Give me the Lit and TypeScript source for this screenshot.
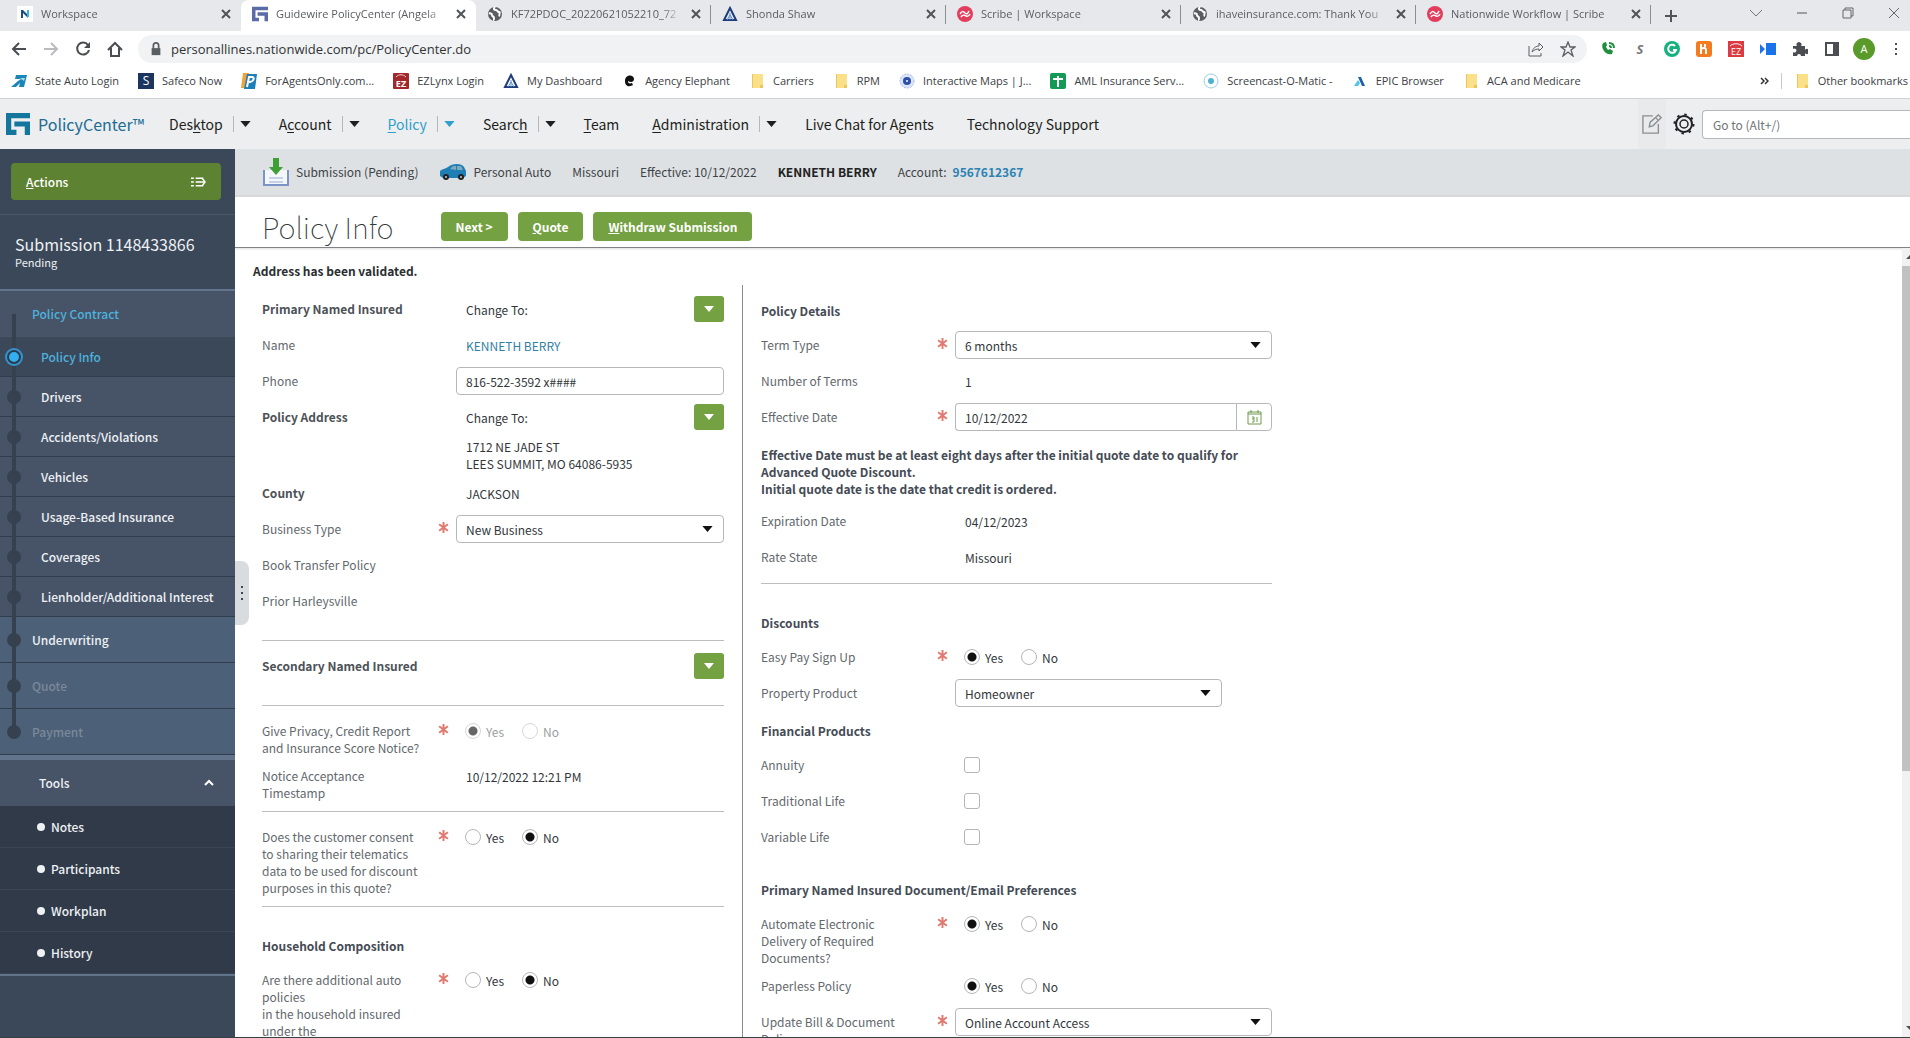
import { LitElement, html, svg, css, nothing, type TemplateResult } from 'lit';
import { customElement } from 'lit/decorators.js';
import { classMap } from 'lit/directives/class-map.js';

const icon = (body: TemplateResult, w = 16, h = w, box = `0 0 ${w} ${h}`) =>
  html`<svg width=${w} height=${h} viewBox=${box} fill="none" aria-hidden="true">${body}</svg>`;

const caret = icon(svg`<path d="M0 0h12L6 7z" fill="currentColor" />`, 11, 6, '0 0 12 7');

const star = icon(svg`<path d="M5 0v10M1 2l8 6M9 2 1 8" stroke="#e07a70" stroke-width="1.8" />`, 11, 11, '0 0 10 10');

const guidewire = (size: number, color: string) =>
  icon(svg`<path d="M0 0h23v5H5v11h5v5H0zM8 8h15v13h-5v-8H8z" fill=${color} />`, size, size, '0 0 23 21');

const globe = icon(svg`
  <circle cx="8" cy="8" r="7" fill="#5a5d61" />
  <path d="M2 7c2 1 3 0 3 2s2 1 2 3-1 2-1 2M8 1c-2 2-1 3 1 3s1 2 3 2-1 3 1 4" stroke="#fff" stroke-width="2" />`);

const scribe = icon(svg`
  <circle cx="8" cy="8" r="8" fill="#e23d5c" />
  <path d="M3 8c2-3 3-3 5-1s3 0 4-2M4 11c2-3 3-2 5-1s3 0 4-2" stroke="#fff" stroke-width="1.5" />`);

const peak = icon(svg`
  <path d="M8 2 14 14H2z" stroke="#1f3c7c" stroke-width="2" />
  <path d="M8 7v7M5 14l3-5 3 5" stroke="#5c8fce" stroke-width="1" />`);

const folder = icon(svg`<path d="M3 1h11v14H3z" fill="#fbe08a" /><path d="M3 1h1v14H3zM11 12h3v3h-3z" fill="#ecc65c" />`);

const tabs = [
  { title: 'Workspace', icon: icon(svg`<rect width="16" height="16" fill="#fff" /><path d="M4 4h2v8H4z" fill="#1f4c7c" /><path d="M6 4l5 5v3L6 7z" fill="#1f4c7c" /><path d="M10 4h2v7h-2z" fill="#38b6e6" />`) },
  { title: 'Guidewire PolicyCenter (Angela', icon: guidewire(16, '#5a6ba8'), active: true },
  { title: 'KF72PDOC_20220621052210_72', icon: globe },
  { title: 'Shonda Shaw', icon: peak },
  { title: 'Scribe | Workspace', icon: scribe },
  { title: 'ihaveinsurance.com: Thank You', icon: globe },
  { title: 'Nationwide Workflow | Scribe', icon: scribe },
];

const bookmarks = [
  { title: 'State Auto Login', icon: icon(svg`<path d="M5 2h11l-3 12H8l1-4-4 4H0l7-6 3-2H4z" fill="#1b87b8" /><path d="M9 5h5l-1 3z" fill="#a6dcef" />`) },
  { title: 'Safeco Now', icon: icon(svg`<rect width="16" height="16" fill="#1c355e" /><text x="8" y="12" font-size="12" text-anchor="middle" fill="#fff">S</text>`) },
  { title: 'ForAgentsOnly.com...', icon: icon(svg`<path d="M2 0h6L5 15H0z" fill="#f0a33c" /><path d="M6 1h10l-2 15H3z" fill="#1d7fb8" /><path d="M6 14 8 4h3c3 0 2 5-3 5" stroke="#fff" stroke-width="2" />`) },
  { title: 'EZLynx Login', icon: icon(svg`<rect width="16" height="16" rx="1" fill="#a3282b" /><path d="M3 4c3-3 7-3 10 0" stroke="#f3d3d3" stroke-width="1" /><text x="8" y="14" font-size="9" font-weight="700" text-anchor="middle" fill="#fff">EZ</text>`) },
  { title: 'My Dashboard', icon: peak },
  { title: 'Agency Elephant', icon: icon(svg`<path d="M13 6c0-5-9-5-9 2 0 6 5 6 8 4l-1-2c-3 1-4 0-4-2 3 2 6 1 6-2z" fill="#111" />`) },
  { title: 'Carriers', icon: folder },
  { title: 'RPM', icon: folder },
  { title: 'Interactive Maps | J...', icon: icon(svg`<circle cx="8" cy="8" r="7" fill="#dbe4fa" stroke="#a9bdf0" stroke-dasharray="2 1" /><circle cx="8" cy="8" r="4" fill="#2c4fa8" /><circle cx="8" cy="8" r="1" fill="#fff" />`) },
  { title: 'AML Insurance Serv...', icon: icon(svg`<rect width="16" height="16" rx="2" fill="#159a56" /><path d="M8 3v11M3 6h10" stroke="#fff" stroke-width="2" />`) },
  { title: 'Screencast-O-Matic -', icon: icon(svg`<circle cx="8" cy="8" r="7" stroke="#9dcfe0" /><circle cx="8" cy="8" r="3" fill="#4fb3cf" />`) },
  { title: 'EPIC Browser', icon: icon(svg`<path d="M2 13 6 7l2 3-2 3z" fill="#4fc3e8" /><path d="M6 4h3l4 9h-3z" fill="#1d5fa8" />`) },
  { title: 'ACA and Medicare', icon: folder },
];

const extensions = [
  icon(svg`<path d="M3 2c-3 5 3 13 9 11l1-3-3-2-2 1-2-3 1-2-1-3z" fill="#1f8f3f" /><path d="M9 2c3 0 5 2 5 5M9 5c1 0 2 1 2 2" stroke="#1f8f3f" stroke-width="2" />`),
  icon(svg`<text x="8" y="13" font-size="13" font-style="italic" font-weight="700" text-anchor="middle" fill="#777">S</text>`),
  icon(svg`<circle cx="8" cy="8" r="8" fill="#15b27c" /><path d="M11 5a4 4 0 1 0 1 4H9" stroke="#fff" stroke-width="2" />`),
  icon(svg`<rect width="16" height="16" rx="3" fill="#f47b20" /><path d="M5 3v10M5 8c3-2 5-1 5 1v4M9 3v3" stroke="#fff" stroke-width="2" />`),
  icon(svg`<rect width="16" height="16" fill="#dc3c41" /><path d="M2 5c3-3 9-3 12 0" stroke="#fff" /><text x="8" y="14" font-size="9" text-anchor="middle" fill="#fff">EZ</text>`),
  icon(svg`<path d="M6 2h10v12H6zM0 3l5 5-5 5z" fill="#1a73e8" />`),
  icon(svg`<path d="M1 5h4a2.500 2.500 0 1 1 4 0h4v4a2.500 2.500 0 1 1 0 3v3H9a2 2 0 1 0-4 0H1v-4a2 2 0 1 0 0-3z" fill="#4a4d51" />`),
  icon(svg`<path d="M2 2h12v12H2z" stroke="#4a4d51" stroke-width="2" /><path d="M9 2h5v12H9z" fill="#4a4d51" />`),
];

@customElement('browser-chrome')
export class BrowserChrome extends LitElement {
  static styles = css`
    :host {
      display: block;
      font: 11px/16px 'Open Sans', sans-serif;
      color: #3c4043;
      background: #fff;
      border-bottom: 1px solid #cfd1d4;
    }
    svg {
      display: block;
      flex: none;
    }
    button {
      display: flex;
      align-items: center;
      justify-content: center;
      padding: 0;
      border: 0;
      background: none;
      color: #5f6368;
      font: inherit;
    }
    .tabs {
      display: flex;
      height: 31px;
      padding-left: 6px;
      background: #e7e8eb;
    }
    .tab {
      display: flex;
      align-items: center;
      gap: 8px;
      flex: 0 1 235px;
      min-width: 0;
      box-sizing: border-box;
      padding: 0 9px 3px 11px;
      background: #e7e8eb;
      position: relative;
    }
    .tab.active {
      background: #fff;
      border-radius: 8px 8px 0 0;
    }
    .tab.divided::after {
      content: '';
      position: absolute;
      right: 0;
      top: 5px;
      height: 19px;
      border-right: 1px solid #8a8d91;
    }
    .title {
      flex: 1;
      overflow: hidden;
      white-space: nowrap;
      color: #5a5d61;
      -webkit-mask-image: linear-gradient(to left, transparent, #000 20px);
    }
    .plus {
      width: 40px;
    }
    .window {
      display: flex;
      flex: 1;
      justify-content: flex-end;
      gap: 30px;
      padding: 0 8px 6px 0;
    }
    .toolbar {
      display: flex;
      align-items: center;
      height: 35px;
      padding: 0 6px 0 11px;
      gap: 16px;
    }
    .address {
      display: flex;
      align-items: center;
      flex: 1;
      gap: 8px;
      height: 28px;
      padding: 0 11px;
      margin: 0 -3px 0 -1px;
      border-radius: 14px;
      background: #f1f2f3;
    }
    .address input {
      flex: 1;
      border: 0;
      background: none;
      color: #303336;
      font: 13px/20px 'Open Sans', sans-serif;
      padding: 0;
    }
    .address button + button {
      margin-left: 8px;
    }
    .avatar {
      width: 22px;
      height: 22px;
      margin: 0 -3px;
      border-radius: 50%;
      background: #5a9a2a;
      color: #fff;
    }
    .bookmarks {
      display: flex;
      align-items: center;
      gap: 19px;
      height: 29px;
      padding: 0 2px 3px 11px;
      white-space: nowrap;
    }
    .bookmarks a {
      display: flex;
      align-items: center;
      gap: 8px;
      color: #3c4043;
      text-decoration: none;
    }
    .more {
      margin-left: auto;
    }
    .bookmarks .other {
      border-left: 1px solid #c8cacd;
      padding-left: 12px;
      margin-left: -7px;
    }
  `;

  render() {
    return html`
      <div class="tabs">
        ${tabs.map(
          (tab, i) => html`
            <div class=${classMap({ tab: true, active: !!tab.active, divided: i > 1 })}>
              ${tab.icon}<span class="title">${tab.title}</span>
              <button aria-label="Close tab">${icon(svg`<path d="M2 2l8 8M10 2l-8 8" stroke="#505357" stroke-width="2" />`, 12)}</button>
            </div>
          `
        )}
        <button class="plus" aria-label="New tab">${icon(svg`<path d="M6 0v12M0 6h12" stroke="#505357" stroke-width="2" />`, 12)}</button>
        <div class="window">
          <button aria-label="Search tabs">${icon(svg`<path d="M2 5l6 6 6-6" stroke="#777" />`)}</button>
          <button aria-label="Minimize">${icon(svg`<path d="M3 8h10" stroke="#555" />`)}</button>
          <button aria-label="Restore">${icon(svg`<path d="M3 5h8v8H3zM5 5V3h8v8h-2" stroke="#666" />`)}</button>
          <button aria-label="Close">${icon(svg`<path d="M3 3l10 10M13 3 3 13" stroke="#666" />`)}</button>
        </div>
      </div>
      <div class="toolbar">
        <button aria-label="Back">${icon(svg`<path d="M15 8H2M8 2 2 8l6 6" stroke="#4a4d51" stroke-width="2" />`)}</button>
        <button aria-label="Forward">${icon(svg`<path d="M1 8h13M8 2l6 6-6 6" stroke="#b9bbbe" stroke-width="2" />`)}</button>
        <button aria-label="Reload">${icon(svg`<path d="M13 4a6 6 0 1 0 1 5" stroke="#4a4d51" stroke-width="2" /><path d="M15 1v6H9z" fill="#4a4d51" />`)}</button>
        <button aria-label="Home">${icon(svg`<path d="M1 9l7-7 7 7M4 7v8h8V7" stroke="#4a4d51" stroke-width="2" />`)}</button>
        <div class="address">
          ${icon(svg`<path d="M3 7h10v8H3z" fill="#5a5d61" /><path d="M5 8V4a3 3 0 0 1 6 0v4" stroke="#5a5d61" stroke-width="2" />`, 14, 14, '0 0 16 16')}
          <input aria-label="Address" value="personallines.nationwide.com/pc/PolicyCenter.do" />
          <button aria-label="Share">${icon(svg`<path d="M1 5v10h12v-3M4 11c1-4 4-6 7-6V2l4 4-4 4V8c-3 0-5 1-7 3z" stroke="#5a5d61" />`)}</button>
          <button aria-label="Bookmark">${icon(svg`<path d="M8 1l2 5h5l-4 3 2 6-5-4-5 4 2-6-4-3h5z" stroke="#5a5d61" stroke-width="1.3" />`)}</button>
        </div>
        ${extensions.map((ext) => html`<button aria-label="Extension">${ext}</button>`)}
        <button class="avatar" aria-label="Profile">A</button>
        <button aria-label="Menu">${icon(svg`<path d="M8 2v2M8 7v2M8 12v2" stroke="#4a4d51" stroke-width="2" />`)}</button>
      </div>
      <nav class="bookmarks">
        ${bookmarks.map((b) => html`<a href="#">${b.icon}${b.title}</a>`)}
        <button class="more" aria-label="More bookmarks">${icon(svg`<path d="M1 1l3 3-3 3M5 1l3 3-3 3" stroke="#333" stroke-width="1.5" />`, 9, 8)}</button>
        <a class="other" href="#">${folder}Other bookmarks</a>
      </nav>
    `;
  }
}

const menu: { pre?: string; key?: string; post?: string; drop?: boolean; active?: boolean }[] = [
  { pre: 'Des', key: 'k', post: 'top', drop: true },
  { pre: 'A', key: 'c', post: 'count', drop: true },
  { key: 'P', post: 'olicy', drop: true, active: true },
  { pre: 'Searc', key: 'h', drop: true },
  { key: 'T', post: 'eam' },
  { key: 'A', post: 'dministration', drop: true },
  { pre: 'Live Chat for Agents' },
  { pre: 'Technology Support' },
];

@customElement('main-menu')
export class MainMenu extends LitElement {
  static styles = css`
    :host {
      display: flex;
      align-items: center;
      height: 50px;
      padding-left: 6px;
      background: #eceeef;
      color: #1d1f21;
      font: 14px/20px 'Noto Sans CJK SC', sans-serif;
      white-space: nowrap;
    }
    svg {
      display: block;
    }
    .brand {
      display: flex;
      align-items: center;
      gap: 8px;
      color: #1c6c94;
      font-size: 16px;
      margin-right: 25px;
    }
    nav {
      display: flex;
      flex: 1;
      gap: 33px;
    }
    .item {
      display: flex;
      align-items: center;
    }
    .item.drop {
      margin-right: -5px;
    }
    a {
      color: inherit;
      text-decoration: none;
    }
    u {
      text-underline-offset: 2px;
    }
    button {
      padding: 0;
      border: 0;
      background: none;
      color: inherit;
    }
    .item button {
      margin-left: 10px;
      padding: 5px 0 5px 6px;
      border-left: 1px solid #b4b8bb;
    }
    .active {
      color: #2f9fcb;
    }
    .tools {
      display: flex;
      align-items: center;
      gap: 7px;
    }
    .note {
      padding: 14px 4px;
      background: #e8eaeb;
    }
    input {
      width: 208px;
      height: 29px;
      box-sizing: border-box;
      padding: 0 10px;
      border: 1px solid #b5b8bb;
      border-right: 0;
      border-radius: 4px 0 0 4px;
      font: 12px/20px 'Noto Sans CJK SC', sans-serif;
    }
    input::placeholder {
      color: #6f7377;
    }
  `;

  render() {
    return html`
      <div class="brand">${guidewire(24, '#14769c')}<span>PolicyCenter™</span></div>
      <nav>
        ${menu.map(
          (m) => html`
            <div class=${classMap({ item: true, drop: !!m.drop, active: !!m.active })}>
              <a href="#">${m.pre}${m.key ? html`<u>${m.key}</u>` : nothing}${m.post}</a>
              ${m.drop ? html`<button aria-label="Open menu">${caret}</button>` : nothing}
            </div>
          `
        )}
      </nav>
      <div class="tools">
        <button class="note" aria-label="Notes">
          ${icon(svg`<path d="M12 2H1v19h17V11" stroke="#8b8f92" stroke-width="1.5" /><path d="M8 14l1-5 9-8 3 3-9 9zM15 4l3 3" stroke="#8b8f92" stroke-width="1.5" />`, 20, 22, '0 0 22 22')}
        </button>
        <button aria-label="Settings">
          ${icon(svg`<circle cx="11" cy="11" r="8" stroke="#1d2226" stroke-width="2" /><circle cx="11" cy="11" r="4" stroke="#1d2226" stroke-width="1.5" /><circle cx="11" cy="11" r="9.5" stroke="#1d2226" stroke-width="2" stroke-dasharray="2.5 4.96" />`, 22)}
        </button>
        <input aria-label="Go to" placeholder="Go to (Alt+/)" />
      </div>
    `;
  }
}

const steps = [
  { title: 'Policy Contract', kind: 'group open' },
  { title: 'Policy Info', kind: 'sub current' },
  { title: 'Drivers', kind: 'sub' },
  { title: 'Accidents/Violations', kind: 'sub' },
  { title: 'Vehicles', kind: 'sub' },
  { title: 'Usage-Based Insurance', kind: 'sub' },
  { title: 'Coverages', kind: 'sub' },
  { title: 'Lienholder/Additional Interest', kind: 'sub' },
  { title: 'Underwriting', kind: 'group' },
  { title: 'Quote', kind: 'group off' },
  { title: 'Payment', kind: 'group off last' },
];

@customElement('policy-sidebar')
export class PolicySidebar extends LitElement {
  static styles = css`
    :host {
      display: block;
      flex: 0 0 235px;
      background: #3b4859;
      color: #eef1f4;
      font: 12px/18px 'Noto Sans CJK SC', sans-serif;
      font-weight: 500;
      position: relative;
    }
    svg {
      display: block;
    }
    a {
      color: inherit;
      text-decoration: none;
    }
    .actions {
      padding: 14px 14px 14px 11px;
      border-bottom: 1px solid #4a5768;
    }
    .actions button {
      display: flex;
      align-items: center;
      justify-content: space-between;
      width: 100%;
      height: 37px;
      padding: 0 15px;
      border: 0;
      border-radius: 4px;
      background: #5d8232;
      color: #fff;
      font: inherit;
    }
    .heading {
      padding: 18px 15px 19px;
      border-bottom: 2px solid #61748c;
      font-weight: 400;
    }
    h2 {
      margin: 0;
      font: inherit;
      font-size: 16px;
      line-height: 22px;
    }
    .heading p {
      margin: 0;
      font-size: 11px;
      line-height: 15px;
    }
    ol,
    ul {
      margin: 0;
      padding: 0;
      list-style: none;
    }
    .step {
      display: flex;
      align-items: center;
      box-sizing: border-box;
      height: 40px;
      padding-left: 41px;
      border-bottom: 1px solid #303d4d;
      background: #475468;
      position: relative;
    }
    .step::before {
      content: '';
      position: absolute;
      left: 12px;
      top: 0;
      bottom: -1px;
      width: 4px;
      background: #35414f;
    }
    .step::after {
      content: '';
      position: absolute;
      left: 7px;
      width: 14px;
      height: 14px;
      border-radius: 50%;
      background: #35414f;
    }
    .group {
      height: 46px;
      padding-left: 32px;
      background: #4c6078;
    }
    .open {
      background: #475468;
      border-bottom: 0;
      color: #4db2dd;
    }
    .open::before {
      top: 23px;
    }
    .open::after {
      display: none;
    }
    .current {
      background: #3b4859;
      color: #4db2dd;
    }
    .current::after {
      width: 10px;
      height: 10px;
      border: 2px solid #2c3a4a;
      background: #33aef0;
      box-shadow: 0 0 0 2px #3494d0;
    }
    .off {
      color: #7b8998;
    }
    .last::before {
      bottom: 23px;
    }
    .tools {
      display: flex;
      align-items: center;
      justify-content: space-between;
      width: 100%;
      height: 51px;
      padding: 0 21px 0 39px;
      border: 0;
      border-top: 5px solid #61748c;
      background: #475468;
      color: inherit;
      font: inherit;
    }
    .links {
      background: #303a49;
      border-bottom: 2px solid #61748c;
    }
    .links li {
      display: flex;
      align-items: center;
      gap: 6px;
      box-sizing: border-box;
      height: 42px;
      padding-left: 37px;
      border-bottom: 1px solid #3a4555;
    }
    .links li::before {
      content: '';
      width: 8px;
      height: 8px;
      border-radius: 50%;
      background: #eef1f4;
    }
    .handle {
      position: absolute;
      left: 235px;
      top: 412px;
      width: 14px;
      height: 64px;
      padding: 0;
      border: 0;
      border-radius: 0 8px 8px 0;
      background: #d8dcde;
      z-index: 1;
    }
    .handle svg {
      margin: 0 auto;
    }
  `;

  render() {
    return html`
      <div class="actions">
        <button>
          <span><u>A</u>ctions</span>
          ${icon(svg`<path d="M0 2h3M5 2h8M0 6h3M5 6h9M0 10h3M5 10h8" stroke="#fff" stroke-width="1.6" /><path d="M12 2l3 4-3 4" stroke="#fff" stroke-width="1.5" />`, 15, 12, '0 0 16 12')}
        </button>
      </div>
      <div class="heading">
        <h2>Submission 1148433866</h2>
        <p>Pending</p>
      </div>
      <ol>
        ${steps.map((s) => html`<li class="step ${s.kind}"><a href="#">${s.title}</a></li>`)}
      </ol>
      <button class="tools">
        Tools ${icon(svg`<path d="M1 6l4-4 4 4" stroke="#fff" stroke-width="2" />`, 10, 8)}
      </button>
      <ul class="links">
        ${['Notes', 'Participants', 'Workplan', 'History'].map((t) => html`<li><a href="#">${t}</a></li>`)}
      </ul>
      <button class="handle" aria-label="Resize sidebar">
        ${icon(svg`<path d="M1 0h2v2H1zM1 6h2v2H1zM1 12h2v2H1z" fill="#3b4859" />`, 4, 14)}
      </button>
    `;
  }
}

@customElement('policy-form')
export class PolicyForm extends LitElement {
  static styles = css`
    :host {
      display: flex;
      flex: 1;
      min-height: 0;
      overflow: hidden;
      color: #33373b;
      font: 12px/17px 'Noto Sans CJK SC', sans-serif;
    }
    svg {
      display: block;
    }
    .body {
      flex: 1;
      min-width: 0;
    }
    .message {
      margin: 0;
      padding: 14px 18px 6px;
      font-weight: 700;
      color: #2b2e31;
    }
    .columns {
      display: flex;
    }
    .col {
      box-sizing: border-box;
      padding: 6px 18px 0 27px;
      flex: 0 1 507px;
    }
    .col + .col {
      flex-basis: 530px;
      padding: 6px 0 0 18px;
      border-left: 1px solid #8b8d90;
    }
    .row {
      display: grid;
      grid-template-columns: 170px 24px 1fr;
    }
    .name {
      padding: 9px 10px 2px 0;
      color: #63686d;
    }
    .name.strong {
      font-weight: 700;
      color: #4d5257;
    }
    .req {
      padding: 11px 6px 0;
    }
    .value {
      display: flex;
      align-items: center;
      align-self: start;
      min-height: 36px;
    }
    .text {
      flex: 1;
      padding-left: 10px;
    }
    .lines {
      grid-column: 3;
      padding: 3px 0 3px 10px;
    }
    a {
      color: #347fa5;
      text-decoration: none;
    }
    input,
    select {
      margin: 0;
      font: inherit;
      color: inherit;
    }
    .box {
      appearance: none;
      flex: 1;
      min-width: 0;
      height: 28px;
      box-sizing: border-box;
      padding: 0 9px;
      border: 1px solid #b5b8bb;
      border-radius: 4px;
      background: #fff;
    }
    .select {
      display: flex;
      flex: 1;
      position: relative;
    }
    .select svg {
      position: absolute;
      right: 11px;
      top: 11px;
      color: #111;
      pointer-events: none;
    }
    .narrow {
      flex: 0 1 267px;
    }
    .date {
      border-radius: 4px 0 0 4px;
      border-right: 0;
    }
    .calendar {
      display: flex;
      align-items: center;
      justify-content: center;
      width: 36px;
      height: 28px;
      padding: 0;
      border: 1px solid #b5b8bb;
      border-radius: 0 4px 4px 0;
      background: #fff;
    }
    .picker {
      display: flex;
      align-items: center;
      justify-content: center;
      width: 30px;
      height: 26px;
      padding: 0;
      border: 0;
      border-radius: 3px;
      background: #74a141;
      color: #fff;
    }
    .picker svg {
      width: 10px;
    }
    .choices {
      display: flex;
      gap: 18px;
      margin: 0;
      padding: 0 0 0 9px;
      border: 0;
    }
    .choices label {
      display: flex;
      align-items: center;
      gap: 5px;
    }
    .choices label:has(:disabled) {
      color: #9b9ea1;
    }
    [type='radio'],
    [type='checkbox'] {
      appearance: none;
      width: 16px;
      height: 16px;
      border: 1px solid #b3b6b9;
      border-radius: 50%;
      background: #fff;
    }
    [type='radio']:checked {
      background: radial-gradient(circle, #111 0 4px, #fff 5px);
    }
    [type='radio']:disabled {
      border-color: #d5d7d9;
    }
    [type='radio']:checked:disabled {
      background: radial-gradient(circle, #666 0 4px, #fff 5px);
    }
    [type='checkbox'] {
      margin-left: 9px;
      border-radius: 3px;
    }
    h3 {
      margin: 2px 0 0;
      padding: 9px 0 8px;
      font: inherit;
      font-weight: 700;
      color: #454b55;
    }
    hr {
      margin: 8px 0 7px;
      border: 0;
      border-top: 1px solid #bbbec0;
    }
    hr.low {
      margin-top: 21px;
    }
    hr.end {
      margin-bottom: 21px;
    }
    .gap {
      margin-top: 17px;
    }
    .note {
      margin: 0;
      padding: 11px 0 6px;
      font-weight: 700;
      color: #454b55;
    }
    .scroll {
      display: flex;
      flex-direction: column;
      align-items: flex-end;
      width: 8px;
      background: #f1f1f1;
      overflow: hidden;
      color: #505050;
    }
    .scroll svg {
      flex: none;
      margin: 6px 0;
    }
    .track {
      flex: 1;
      width: 100%;
    }
    .thumb {
      height: 67%;
      background: #c1c1c1;
    }
  `;

  private row(name: string, value: unknown = nothing, opts: { id?: string; req?: boolean; strong?: boolean } = {}) {
    const cls = classMap({ name: true, strong: !!opts.strong });
    return html`
      <div class="row">
        ${opts.id ? html`<label class=${cls} for=${opts.id}>${name}</label>` : html`<div class=${cls}>${name}</div>`}
        <div class="req">${opts.req ? star : nothing}</div>
        <div class="value">${value}</div>
      </div>
    `;
  }

  private text(value: unknown) {
    return html`<span class="text">${value}</span>`;
  }

  private select(id: string, value: string, narrow = false) {
    return html`
      <div class=${classMap({ select: true, narrow })}>
        <select class="box" id=${id}><option>${value}</option></select>
        ${caret}
      </div>
    `;
  }

  private yesNo(name: string, label: string, value: 'Yes' | 'No', disabled = false) {
    return html`
      <fieldset class="choices" aria-label=${label}>
        ${['Yes', 'No'].map(
          (v) => html`<label><input type="radio" name=${name} ?checked=${v === value} ?disabled=${disabled} />${v}</label>`
        )}
      </fieldset>
    `;
  }

  private radioRow(name: string, label: string, value: 'Yes' | 'No', req = true, disabled = false) {
    return this.row(label, this.yesNo(name, label, value, disabled), { req });
  }

  private picker(label: string) {
    return html`<button class="picker" aria-label=${label}>${caret}</button>`;
  }

  private checkRow(id: string, label: string) {
    return this.row(label, html`<input type="checkbox" id=${id} />`, { id });
  }

  render() {
    return html`
      <div class="body">
        <p class="message">Address has been validated.</p>
        <div class="columns">
          <section class="col">
            ${this.row('Primary Named Insured', html`${this.text('Change To:')}${this.picker('Change primary insured')}`, { strong: true })}
            ${this.row('Name', this.text(html`<a href="#">KENNETH BERRY</a>`))}
            ${this.row('Phone', html`<input class="box" id="phone" value="816-522-3592 x####" />`, { id: 'phone' })}
            ${this.row('Policy Address', html`${this.text('Change To:')}${this.picker('Change address')}`, { strong: true })}
            <div class="row"><div class="lines">1712 NE JADE ST<br />LEES SUMMIT, MO 64086-5935</div></div>
            ${this.row('County', this.text('JACKSON'), { strong: true })}
            ${this.row('Business Type', this.select('business', 'New Business'), { id: 'business', req: true })}
            ${this.row('Book Transfer Policy')}
            ${this.row('Prior Harleysville')}
            <hr class="low" />
            ${this.row('Secondary Named Insured', html`${this.text('')}${this.picker('Add secondary insured')}`, { strong: true })}
            <hr class="low" />
            ${this.radioRow('privacy', 'Give Privacy, Credit Report and Insurance Score Notice?', 'Yes', true, true)}
            ${this.row('Notice Acceptance Timestamp', this.text('10/12/2022 12:21 PM'))}
            <hr />
            ${this.radioRow('telematics', 'Does the customer consent to sharing their telematics data to be used for discount purposes in this quote?', 'No')}
            <hr class="end" />
            <h3>Household Composition</h3>
            <div class="row">
              <div class="name">Are there additional auto policies<br />in the household insured under the</div>
              <div class="req">${star}</div>
              <div class="value">${this.yesNo('household', 'Additional auto policies', 'No')}</div>
            </div>
          </section>
          <section class="col">
            <h3>Policy Details</h3>
            ${this.row('Term Type', this.select('term', '6 months'), { id: 'term', req: true })}
            ${this.row('Number of Terms', this.text('1'))}
            ${this.row(
              'Effective Date',
              html`
                <input class="box date" id="effective" value="10/12/2022" />
                <button class="calendar" aria-label="Pick a date">
                  ${icon(svg`<path d="M1 3h13v12H1zM1 5h13M4 1v3M11 1v3" stroke="#6d9a4d" /><path d="M5 8h2v2H5M7 10v3H5M10 8v5" stroke="#6d9a4d" />`, 15, 16)}
                </button>
              `,
              { id: 'effective', req: true }
            )}
            <p class="note">
              Effective Date must be at least eight days after the initial quote date to qualify for Advanced Quote Discount.<br />
              Initial quote date is the date that credit is ordered.
            </p>
            ${this.row('Expiration Date', this.text('04/12/2023'))}
            ${this.row('Rate State', this.text('Missouri'))}
            <hr class="end" />
            <h3>Discounts</h3>
            ${this.radioRow('easypay', 'Easy Pay Sign Up', 'Yes')}
            ${this.row('Property Product', this.select('property', 'Homeowner', true), { id: 'property' })}
            <h3>Financial Products</h3>
            ${this.checkRow('annuity', 'Annuity')}
            ${this.checkRow('traditional', 'Traditional Life')}
            ${this.checkRow('variable', 'Variable Life')}
            <h3 class="gap">Primary Named Insured Document/Email Preferences</h3>
            ${this.radioRow('delivery', 'Automate Electronic Delivery of Required Documents?', 'Yes')}
            ${this.radioRow('paperless', 'Paperless Policy', 'Yes', false)}
            ${this.row('Update Bill & Document Delivery', this.select('bill', 'Online Account Access'), { id: 'bill', req: true })}
          </section>
        </div>
      </div>
      <div class="scroll" aria-hidden="true">
        ${icon(svg`<path d="M0 5l4-4v4z" fill="currentColor" />`, 4, 6)}
        <div class="track"><div class="thumb"></div></div>
        ${icon(svg`<path d="M0 1h4v4z" fill="currentColor" />`, 4, 6)}
      </div>
    `;
  }
}

@customElement('app-root')
export class AppRoot extends LitElement {
  static styles = css`
    :host {
      display: flex;
      flex-direction: column;
      box-sizing: border-box;
      height: 100vh;
      overflow: hidden;
      background: #fff;
      border-bottom: 1px solid #3a3f44;
      font: 12px/18px 'Noto Sans CJK SC', sans-serif;
    }
    .workspace {
      display: flex;
      flex: 1;
      min-height: 0;
    }
    main {
      display: flex;
      flex-direction: column;
      flex: 1;
      min-width: 0;
    }
    .context {
      display: flex;
      align-items: center;
      gap: 21px;
      height: 46px;
      padding-left: 27px;
      border-bottom: 2px solid #d6d8d9;
      background: #dde1e4;
      color: #3f4347;
      white-space: nowrap;
    }
    .context span {
      display: flex;
      align-items: center;
      gap: 6px;
    }
    .context b {
      color: #222;
    }
    .context a {
      color: #2c83b3;
      font-weight: 700;
      text-decoration: none;
    }
    .heading {
      display: flex;
      align-items: center;
      gap: 10px;
      height: 51px;
      padding: 9px 27px 0;
      box-sizing: border-box;
      border-bottom: 1px solid #808285;
      box-shadow: 0 1px 2px #ddd;
    }
    h1 {
      margin: 0 37px 2px 0;
      font-family: 'Noto Sans CJK SC Thin', 'Noto Sans CJK SC Light', 'Noto Sans CJK SC', sans-serif;
      font-size: 29px;
      line-height: 36px;
      font-weight: 100;
      color: #33373b;
    }
    .heading button {
      height: 29px;
      padding: 0 15px;
      border: 0;
      border-radius: 4px;
      background: #74a141;
      color: #fff;
      font: inherit;
      font-weight: 700;
    }
  `;

  render() {
    return html`
      <browser-chrome></browser-chrome>
      <main-menu></main-menu>
      <div class="workspace">
        <policy-sidebar></policy-sidebar>
        <main>
          <div class="context">
            <span>
              ${icon(svg`
                <path d="M3 12h22v14H3z" fill="#f4f6fb" />
                <path d="M2 12v15h24V12" stroke="#7c93c8" stroke-width="2" />
                <path d="M7 20h14M7 24h14" stroke="#9aabd2" />
                <path d="M11 0h6v9h4l-7 8-7-8h4z" fill="#3f9f35" />`, 28, 28)}
              Submission (Pending)
            </span>
            <span>
              ${icon(svg`
                <path d="M1 8c2-2 5-2 8-4 4-4 14-4 16 0l2 4v5l-3 2H4l-3-2z" fill="#1d7fb5" />
                <path d="M11 6l3-3h3v4zM18 3h4l2 4h-6z" fill="#7fa9bd" />
                <circle cx="7" cy="14" r="3" fill="#222" /><circle cx="22" cy="14" r="3" fill="#222" />
                <circle cx="7" cy="14" r="1" fill="#ccc" /><circle cx="22" cy="14" r="1" fill="#ccc" />`, 28, 18)}
              Personal Auto
            </span>
            <span>Missouri</span>
            <span>Effective: 10/12/2022</span>
            <b>KENNETH BERRY</b>
            <span>Account: <a href="#">9567612367</a></span>
          </div>
          <div class="heading">
            <h1>Policy Info</h1>
            <button>Next &gt;</button>
            <button><u>Q</u>uote</button>
            <button><u>W</u>ithdraw Submission</button>
          </div>
          <policy-form></policy-form>
        </main>
      </div>
    `;
  }
}
